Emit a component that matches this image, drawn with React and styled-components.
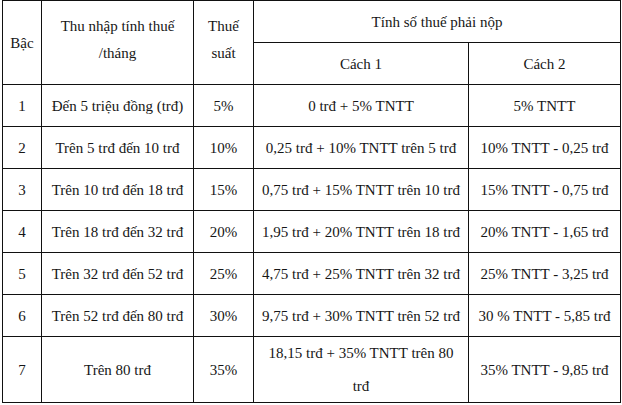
import React from "react";
import styled, { createGlobalStyle } from "styled-components";

const Global = createGlobalStyle`
  html, body { margin: 0; padding: 0; background: #fff; }
  body { font-family: "Liberation Serif", "Times New Roman", "DejaVu Serif", serif; }
`;

const Page = styled.div`
  padding: 0 0 0 2px;
  background: #fff;
`;

const Table = styled.div`
  display: grid;
  width: 619px;
  box-sizing: border-box;
  grid-template-columns: 38px 151px 59px 214px 151px;
  grid-template-rows: 41px 41px repeat(6, 41px) 65px;
  gap: 1px;
  padding: 1px;
  background: #111;
`;

const Cell = styled.div`
  background: #fff;
  display: flex;
  align-items: center;
  justify-content: center;
  text-align: center;
  font-family: "Liberation Serif", "Times New Roman", "DejaVu Serif", serif;
  font-size: 15px;
  line-height: ${(p) => p.$lh || 18}px;
  color: #161616;
  grid-column: ${(p) => p.$col || "auto"};
  grid-row: ${(p) => p.$row || "auto"};
  padding-bottom: ${(p) => p.$pb || 0}px;
`;

const rows = [
  ["1", "Đến 5 triệu đồng (trđ)", "5%", "0 trđ + 5% TNTT", "5% TNTT"],
  ["2", "Trên 5 trđ đến 10 trđ", "10%", "0,25 trđ + 10% TNTT trên 5 trđ", "10% TNTT - 0,25 trđ"],
  ["3", "Trên 10 trđ đến 18 trđ", "15%", "0,75 trđ + 15% TNTT trên 10 trđ", "15% TNTT - 0,75 trđ"],
  ["4", "Trên 18 trđ đến 32 trđ", "20%", "1,95 trđ + 20% TNTT trên 18 trđ", "20% TNTT - 1,65 trđ"],
  ["5", "Trên 32 trđ đến 52 trđ", "25%", "4,75 trđ + 25% TNTT trên 32 trđ", "25% TNTT - 3,25 trđ"],
  ["6", "Trên 52 trđ đến 80 trđ", "30%", "9,75 trđ + 30% TNTT trên 52 trđ", "30 % TNTT - 5,85 trđ"],
];

export default function App() {
  return (
    <>
      <Global />
      <Page>
        <Table>
          <Cell $col="1" $row="1 / span 2">Bậc</Cell>
          <Cell $col="2" $row="1 / span 2" $lh={27} $pb={6}>
            Thu nhập tính thuế
            <br />
            /tháng
          </Cell>
          <Cell $col="3" $row="1 / span 2" $lh={27} $pb={6}>
            Thuế
            <br />
            suất
          </Cell>
          <Cell $col="4 / span 2" $row="1">Tính số thuế phải nộp</Cell>
          <Cell $col="4" $row="2">Cách 1</Cell>
          <Cell $col="5" $row="2">Cách 2</Cell>
          {rows.map((r) =>
            r.map((t, i) => <Cell key={r[0] + "-" + i}>{t}</Cell>)
          )}
          <Cell>7</Cell>
          <Cell>Trên 80 trđ</Cell>
          <Cell>35%</Cell>
          <Cell $lh={33}>
            18,15 trđ + 35% TNTT trên 80
            <br />
            trđ
          </Cell>
          <Cell>35% TNTT - 9,85 trđ</Cell>
        </Table>
      </Page>
    </>
  );
}
